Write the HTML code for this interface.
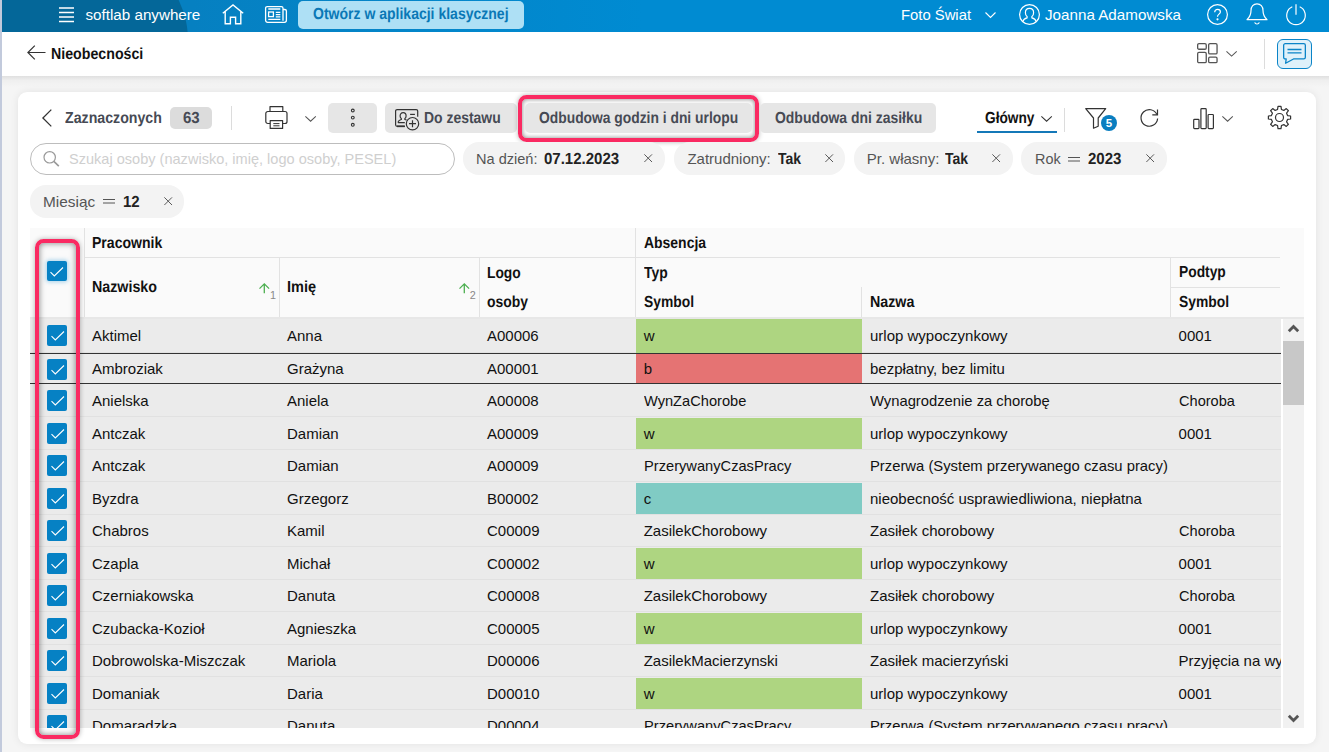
<!DOCTYPE html>
<html lang="pl">
<head>
<meta charset="utf-8">
<title>Nieobecności</title>
<style>
*{box-sizing:border-box;margin:0;padding:0}
html,body{width:1329px;height:752px;overflow:hidden}
body{font-family:"Liberation Sans",sans-serif;font-size:15px;color:#111;background:#f5f5f5;position:relative}
.abs{position:absolute}
.b{font-weight:bold;font-size:16px;display:inline-block;transform-origin:0 50%;transform:scaleX(.872);white-space:nowrap;text-rendering:geometricPrecision}
.t{position:absolute;white-space:nowrap;line-height:20px}
svg{position:absolute;overflow:visible}
#edge{left:0;top:0;width:2px;height:752px;background:#c2cadc}
#top{left:2px;top:0;width:1327px;height:31.700px;background:linear-gradient(90deg,#0680c1 190px,#008bd2 640px);overflow:hidden}
#topdark{left:-40px;top:-60px;width:226px;height:200px;background:#046799;border-radius:0 50% 50% 0/0 50% 50% 0}
#top .t{color:#fff;font-size:15px;line-height:20px;top:5px}
#bar2{left:2px;top:31.700px;width:1327px;height:44.300px;background:#fff}
#shade{left:2px;top:76px;width:1327px;height:11px;background:linear-gradient(#e0e0e0,#efefef 40%,#f5f5f5)}
#card{left:17.5px;top:91.5px;width:1298px;height:652px;background:#fff;border-radius:9px;box-shadow:0 0 9px rgba(0,0,0,.08)}

.btn{position:absolute;top:103px;height:30px;background:#e6e6e6;border-radius:5px}
.bt{position:absolute;top:107.700px;line-height:20px;color:#464a54;white-space:nowrap}
.chip{position:absolute;height:32.800px;background:#f3f3f3;border-radius:16px}
.ct{position:absolute;line-height:20px;white-space:nowrap;color:#555}
.ct .b{color:#222}
.x{position:absolute;width:8.400px;height:8.400px}

#tbl{position:absolute;left:30px;top:228px;width:1274px;height:499.500px;overflow:hidden;background:#fff}
#hdr{position:absolute;left:0;top:0;width:1274px;height:91px;background:#fafafa;border-bottom:2px solid #e7e7e7}
.vl{position:absolute;width:1px;background:#e2e2e2}
.hl{position:absolute;height:1px;background:#e2e2e2}
.ht{position:absolute;line-height:20px;white-space:nowrap;color:#111}
.row{position:absolute;left:0;width:1251px;height:32.500px;background:#ebebeb;border-bottom:1px solid #e1e1e1}
.row span{position:absolute;top:6.500px;line-height:20px;white-space:nowrap;color:#111}
.cc{position:absolute;left:605.800px;top:.500px;width:226.400px;height:31px}
.cb{position:absolute;left:17px;top:5.500px;width:20.300px;height:21px;background:#0681c4;border-radius:2px}
.cb svg{left:3.700px;top:6px}
</style>
</head>
<body>
<div class="abs" id="edge"></div>
<div class="abs" id="top">
  <div class="abs" id="topdark"></div>
  <svg style="left:56.5px;top:7px" width="15" height="16" viewBox="0 0 15 16" fill="none" stroke="#fff" stroke-width="1.5"><path d="M0 1h15M0 5.5h15M0 10h15M0 14.5h15"/></svg>
  <span class="t" style="left:83.5px;font-size:15.2px;top:5px">softlab anywhere</span>
  <svg style="left:219.5px;top:3.5px" width="22" height="21" viewBox="0 0 22 21" fill="none" stroke="#fff" stroke-width="1.4" stroke-linejoin="miter"><path d="M0.8 9.2L11 0.9l10.2 8.3M3.2 7.6V19.8h5.2v-6.6h5.2v6.6h5.2V7.6"/></svg>
  <svg style="left:262.5px;top:6px" width="22" height="17" viewBox="0 0 22 17" fill="none" stroke="#fff" stroke-width="1.3"><path d="M18 3.5h1.8a1.6 1.6 0 0 1 1.6 1.6v9.2a2 2 0 0 1-2 2H2.6a2 2 0 0 1-2-2V2.2A1.6 1.6 0 0 1 2.200 .6h14.200a1.600 1.600 0 0 1 1.600 1.600v12.600"/><path d="M3.300 3h12M3.300 13.300h12M10.800 6.300h4.500M10.800 8.600h4.500M10.800 10.800h4.500"/><rect x="3.600" y="6" width="4.800" height="4.600"/></svg>
  <div class="abs" style="left:296px;top:1px;width:225.500px;height:28px;background:#aee0f5;border-radius:5px"></div>
  <span class="t" style="left:311.300px;top:4.300px;color:#0a78b6"><span class="b" style="transform:scaleX(.876)">Otwórz w aplikacji klasycznej</span></span>
  <span class="t" style="left:899.200px;top:4.500px"><span style="display:inline-block;transform-origin:0 50%;transform:scaleX(.988)">Foto Świat</span></span>
  <svg style="left:983px;top:11.500px" width="11" height="6" viewBox="0 0 11 6" fill="none" stroke="#fff" stroke-width="1.100"><path d="M.5.500l5 5 5-5"/></svg>
  <svg style="left:1016.500px;top:3.900px" width="21" height="21" viewBox="0 0 21 21" fill="none" stroke="#fff" stroke-width="1.200"><circle cx="10.500" cy="10.500" r="9.900"/><path d="M3.800 17.600c.6-2.400 2.200-3.200 4.300-3.700v-1.300c-1.100-.8-1.700-2.200-1.700-3.900 0-2.500 1.600-4.300 4.100-4.300s4.100 1.800 4.100 4.300c0 1.700-.6 3.100-1.700 3.900v1.300c2.100.5 3.700 1.300 4.300 3.700"/></svg>
  <span class="t" style="left:1043.300px;top:4.500px"><span style="display:inline-block;transform-origin:0 50%;transform:scaleX(1.013)">Joanna Adamowska</span></span>
  <svg style="left:1204.700px;top:3.900px" width="21" height="21" viewBox="0 0 21 21" fill="none" stroke="#fff" stroke-width="1.200"><circle cx="10.500" cy="10.500" r="9.900"/><path d="M7.700 8.200c0-1.700 1.200-2.800 2.900-2.800 1.600 0 2.800 1 2.800 2.500 0 2.200-2.900 2.300-2.900 4.800"/><circle cx="10.500" cy="15.300" r=".5" fill="#fff"/></svg>
  <svg style="left:1244px;top:2.900px" width="22" height="22" viewBox="0 0 22 22" fill="none" stroke="#fff" stroke-width="1.200" stroke-linejoin="round"><path d="M11 .8c-3.600 0-6 2.800-6 6.600 0 4.500-1.700 7-4 9.300h20c-2.300-2.300-4-4.800-4-9.300 0-3.800-2.400-6.600-6-6.600z"/><path d="M8.700 19.300a2.400 2.400 0 0 0 4.600 0"/></svg>
  <svg style="left:1283.500px;top:3.500px" width="20" height="21" viewBox="0 0 20 21" fill="none" stroke="#fff" stroke-width="1.200"><path d="M10 .3v10.500"/><path d="M6.300 2.800a9.300 9.300 0 1 0 7.400 0"/></svg>
</div>
<div class="abs" id="bar2">
  <svg style="left:24.500px;top:13px" width="19" height="15" viewBox="0 0 19 15" fill="none" stroke="#333" stroke-width="1.200"><path d="M18.500 7.500H1M7.800.600L.900 7.500l6.900 6.900"/></svg>
  <span class="t" style="left:48.800px;top:12.300px;color:#111"><span class="b" style="transform:scaleX(.887)">Nieobecności</span></span>
  <svg style="left:1195px;top:11.200px" width="21" height="21" viewBox="0 0 21 21" fill="none" stroke="#555" stroke-width="1.300"><rect x=".65" y=".65" width="8.600" height="5.600" rx="1.300"/><rect x=".65" y="9.400" width="8.600" height="10.300" rx="1.300"/><rect x="11.650" y=".65" width="8.400" height="10.300" rx="1.300"/><rect x="11.650" y="14.100" width="8.400" height="5.600" rx="1.300"/></svg>
  <svg style="left:1224.200px;top:19.500px" width="11.200" height="5.600" viewBox="0 0 12 6" fill="none" stroke="#555" stroke-width="1.100"><path d="M.5.400l5.500 5 5.500-5"/></svg>
  <div class="abs" style="left:1262px;top:7.500px;width:1px;height:30px;background:#dcdcdc"></div>
  <div class="abs" style="left:1275px;top:7.500px;width:35px;height:30px;border:1.500px solid #0a84c8;background:#dff1fa;border-radius:6px"></div>
  <svg style="left:1281.400px;top:11.400px" width="23" height="21" viewBox="0 0 23 21" fill="none" stroke="#0a84c8" stroke-width="1.300" stroke-linejoin="round"><path d="M2.300.65h18.400a1.650 1.650 0 0 1 1.650 1.650v12a1.650 1.650 0 0 1-1.650 1.650H10.500L2.600 20.300l.600-4.350H2.300A1.650 1.650 0 0 1 .65 14.300v-12A1.650 1.650 0 0 1 2.300.65z"/><path d="M4.500 6.500h14M4.500 9.800h14"/></svg>
</div>
<div class="abs" id="shade"></div>
<div class="abs" id="card"></div>
<div id="toolbar">
  <svg style="left:41.500px;top:109px" width="10" height="18" viewBox="0 0 10 18" fill="none" stroke="#333" stroke-width="1.300"><path d="M9.300.600L.900 9l8.400 8.400"/></svg>
  <span class="bt" style="left:64.500px"><span class="b" style="transform:scaleX(0.886)">Zaznaczonych</span></span>
  <div class="abs" style="left:170px;top:107px;width:42px;height:22px;background:#dcdcdc;border-radius:5px"></div>
  <span class="bt" style="left:182.500px"><span class="b" style="transform:scaleX(.9375)">63</span></span>
  <div class="abs" style="left:230.500px;top:106px;width:1px;height:24px;background:#dcdcdc"></div>
  <svg style="left:265px;top:106px" width="23" height="23" viewBox="0 0 23 23" fill="none" stroke="#333" stroke-width="1.200" stroke-linejoin="round"><path d="M5 5.500V.600h12.800V5.500"/><path d="M5.200 17.500H2.800A2 2 0 0 1 .800 15.500V7.500a2 2 0 0 1 2-2h17.200a2 2 0 0 1 2 2v8a2 2 0 0 1-2 2h-2.400"/><path d="M5.200 14.600h12.400v7.800H5.200z"/><path d="M8.300 17.600h6.200M8.300 19.800h6.200" stroke-width="1"/></svg>
  <svg style="left:304.500px;top:115.500px" width="11.200" height="5.600" viewBox="0 0 12 6" fill="none" stroke="#555" stroke-width="1.100"><path d="M.400.400l5.600 5.200 5.600-5.200"/></svg>
  <div class="btn" style="left:328px;width:48.500px"></div>
  <svg style="left:350px;top:108px" width="6" height="20" viewBox="0 0 6 20" fill="none" stroke="#333" stroke-width="1.100"><circle cx="2.800" cy="2.500" r="1.400"/><circle cx="2.800" cy="9.600" r="1.400"/><circle cx="2.800" cy="16.800" r="1.400"/></svg>
  <div class="btn" style="left:385px;width:131.500px"></div>
  <svg style="left:395px;top:108.800px" width="25" height="22" viewBox="0 0 25 22" fill="none" stroke="#333" stroke-width="1.200"><path d="M9.800 17.300H2.100A1.500 1.500 0 0 1 .600 15.800V2.100A1.500 1.500 0 0 1 2.100.600h19.100a1.500 1.500 0 0 1 1.500 1.500v5.700"/><path d="M2 17.300h7.800" stroke-width="1.700"/><path d="M9.800 13.700H3.900c-.600 0-.900-.500-.600-1.100.500-1.100 1.600-1.700 3-2.100v-.900c-.800-.600-1.200-1.500-1.200-2.600 0-1.900 1.200-3.300 3-3.300s3 1.400 3 3.300c0 1.100-.400 2-1.200 2.600v.900c.700.200 1.200.400 1.600.700"/><path d="M15.100 5.400h4.800"/><circle cx="17.500" cy="14.700" r="6.200" fill="#e6e6e6"/><path d="M17.500 11.200v7M14 14.700h7"/></svg>
  <span class="bt" style="left:423.600px"><span class="b" style="transform:scaleX(0.872)">Do zestawu</span></span>
  <div class="abs" style="left:518.400px;top:95px;width:240.600px;height:47px;border:4.300px solid #fa2a62;border-radius:8.500px;box-shadow:0 0 5px rgba(0,0,0,.3),inset 0 0 5px rgba(0,0,0,.5)"></div>
  <div class="btn" style="left:524.500px;width:227px"></div>
  <span class="bt" style="left:538.500px"><span class="b" style="transform:scaleX(0.865)">Odbudowa godzin i dni urlopu</span></span>
  <div class="btn" style="left:759.500px;width:176px"></div>
  <span class="bt" style="left:774.500px"><span class="b" style="transform:scaleX(0.872)">Odbudowa dni zasiłku</span></span>
  <span class="bt" style="left:984.500px;color:#111"><span class="b" style="transform:scaleX(0.855)">Główny</span></span>
  <svg style="left:1041px;top:115.500px" width="11.200" height="5.600" viewBox="0 0 12 6" fill="none" stroke="#333" stroke-width="1.100"><path d="M.400.400l5.600 5.200 5.600-5.200"/></svg>
  <div class="abs" style="left:977px;top:130.500px;width:80px;height:2px;background:#1478b8"></div>
  <div class="abs" style="left:1064px;top:108px;width:1px;height:24px;background:#dcdcdc"></div>
  <svg style="left:1085px;top:107.500px" width="22" height="21" viewBox="0 0 22 21" fill="none" stroke="#333" stroke-width="1.200" stroke-linejoin="round"><path d="M.700.700h20L13.200 10v8.200L8.500 20.200V10z"/></svg>
  <div class="abs" style="left:1101px;top:115px;width:16.400px;height:16.400px;border-radius:50%;background:#0a7ec0"></div>
  <span class="t" style="left:1105.800px;top:113px;color:#fff;font-size:11.500px;font-weight:bold">5</span>
  <svg style="left:1139.500px;top:107.500px" width="20" height="20" viewBox="0 0 20 20" fill="none" stroke="#333" stroke-width="1.200"><path d="M16.900 6.500A8.300 8.300 0 1 0 17.600 10.500"/><path d="M12.300 6.900h5.200V1.600"/></svg>
  <svg style="left:1192.500px;top:107.500px" width="21" height="21" viewBox="0 0 21 21" fill="none" stroke="#333" stroke-width="1.200"><rect x=".700" y="11.400" width="5.300" height="9.200" rx=".800"/><rect x="7.900" y=".600" width="5.300" height="20" rx=".800"/><rect x="15.100" y="6.500" width="5.300" height="14.100" rx=".800"/></svg>
  <svg style="left:1222px;top:115.500px" width="11.200" height="5.600" viewBox="0 0 12 6" fill="none" stroke="#555" stroke-width="1.100"><path d="M.400.400l5.600 5.200 5.600-5.200"/></svg>
  <svg style="left:1267.700px;top:106px" width="23" height="23" viewBox="0 0 23 23" fill="none" stroke="#333" stroke-width="1.200" stroke-linejoin="round"><path d="M22.600 10.010 L22.600 12.990 L19.570 13.440 L18.580 15.840 L20.400 18.290 L18.290 20.400 L15.840 18.580 L13.440 19.570 L12.990 22.600 L10.010 22.600 L9.560 19.570 L7.160 18.580 L4.710 20.400 L2.600 18.290 L4.420 15.840 L3.430 13.440 L.400 12.990 L.400 10.010 L3.430 9.560 L4.420 7.160 L2.600 4.710 L4.710 2.600 L7.160 4.420 L9.560 3.430 L10.010.400 L12.990.400 L13.440 3.430 L15.840 4.420 L18.290 2.600 L20.400 4.710 L18.580 7.160 L19.570 9.560Z"/><circle cx="11.500" cy="11.500" r="4"/></svg>
</div>
<div id="filters">
  <div class="abs" style="left:30px;top:143px;width:424.500px;height:31.500px;border:1px solid #bdbdbd;border-radius:16px;background:#fff"></div>
  <svg style="left:42.500px;top:151px" width="17" height="16" viewBox="0 0 17 16" fill="none" stroke="#999" stroke-width="1.200"><circle cx="6.700" cy="6.300" r="5.700"/><path d="M10.800 10.400l5 4.800" stroke-width="1.600"/></svg>
  <span class="ct" style="left:68.500px;top:149px;color:#cfcfcf"><span style="display:inline-block;transform-origin:0 50%;transform:scaleX(.97)">Szukaj osoby (nazwisko, imię, logo osoby, PESEL)</span></span>
  <div class="chip" style="left:463.200px;top:142.200px;width:202px"></div>
  <span class="ct" style="left:476px;top:149px"><span style="display:inline-block;transform-origin:0 50%;transform:scaleX(.97)">Na dzień:</span></span>
  <span class="ct" style="left:544px;top:149px"><span class="b" style="transform:scaleX(.9375)">07.12.2023</span></span>
  <svg class="x" style="left:644px;top:154px" viewBox="0 0 9 9" fill="none" stroke="#555" stroke-width="1.050"><path d="M.400.400l8.200 8.200M8.600.400L.400 8.600"/></svg>
  <div class="chip" style="left:674px;top:142.200px;width:171px"></div>
  <span class="ct" style="left:687.400px;top:149px">Zatrudniony:</span>
  <span class="ct" style="left:777.500px;top:149px"><span class="b" style="transform:scaleX(0.872)">Tak</span></span>
  <svg class="x" style="left:824.5px;top:154px" viewBox="0 0 9 9" fill="none" stroke="#555" stroke-width="1.050"><path d="M.400.400l8.200 8.200M8.600.400L.400 8.600"/></svg>
  <div class="chip" style="left:853.500px;top:142.200px;width:159.700px"></div>
  <span class="ct" style="left:866.800px;top:149px">Pr. własny:</span>
  <span class="ct" style="left:945px;top:149px"><span class="b" style="transform:scaleX(0.872)">Tak</span></span>
  <svg class="x" style="left:992.2px;top:154px" viewBox="0 0 9 9" fill="none" stroke="#555" stroke-width="1.050"><path d="M.400.400l8.200 8.200M8.600.400L.400 8.600"/></svg>
  <div class="chip" style="left:1021px;top:142.200px;width:146.200px"></div>
  <span class="ct" style="left:1035px;top:149px"><span style="display:inline-block;transform-origin:0 50%;transform:scaleX(.96)">Rok</span></span>
  <svg style="left:1068px;top:156.5px" width="12" height="5" viewBox="0 0 12 5" fill="none" stroke="#555" stroke-width="1"><path d="M0 .500h12M0 4h12"/></svg>
  <span class="ct" style="left:1088px;top:149px"><span class="b" style="transform:scaleX(.9375)">2023</span></span>
  <svg class="x" style="left:1145.5px;top:154px" viewBox="0 0 9 9" fill="none" stroke="#555" stroke-width="1.050"><path d="M.400.400l8.200 8.200M8.600.400L.400 8.600"/></svg>
  <div class="chip" style="left:30px;top:185px;width:154px"></div>
  <span class="ct" style="left:43px;top:191.500px;transform-origin:0 50%;transform:scaleX(1.025)">Miesiąc</span>
  <svg style="left:102.8px;top:198.5px" width="12" height="5" viewBox="0 0 12 5" fill="none" stroke="#555" stroke-width="1"><path d="M0 .500h12M0 4h12"/></svg>
  <span class="ct" style="left:122.800px;top:191.500px"><span class="b" style="transform:scaleX(.9375)">12</span></span>
  <svg class="x" style="left:163.5px;top:197px" viewBox="0 0 9 9" fill="none" stroke="#555" stroke-width="1.050"><path d="M.400.400l8.200 8.200M8.600.400L.400 8.600"/></svg>
</div>
<div id="tbl">
<div id="hdr">
<span class="ht" style="left:62px;top:4.600px"><span class="b" style="transform:scaleX(0.878)">Pracownik</span></span><span class="ht" style="left:613.700px;top:4.600px"><span class="b" style="transform:scaleX(0.872)">Absencja</span></span><span class="ht" style="left:62px;top:49px"><span class="b" style="transform:scaleX(0.891)">Nazwisko</span></span><span class="ht" style="left:257px;top:49px"><span class="b" style="transform:scaleX(0.906)">Imię</span></span><span class="ht" style="left:457px;top:34.5px"><span class="b" style="transform:scaleX(0.863)">Logo</span></span><span class="ht" style="left:457px;top:63.5px"><span class="b" style="transform:scaleX(0.870)">osoby</span></span><span class="ht" style="left:613.7px;top:34.5px"><span class="b" style="transform:scaleX(0.869)">Typ</span></span><span class="ht" style="left:613.7px;top:63.5px"><span class="b" style="transform:scaleX(0.865)">Symbol</span></span><span class="ht" style="left:840px;top:63.5px"><span class="b" style="transform:scaleX(0.891)">Nazwa</span></span><span class="ht" style="left:1148.6px;top:34px"><span class="b" style="transform:scaleX(0.863)">Podtyp</span></span><span class="ht" style="left:1148.6px;top:63.5px"><span class="b" style="transform:scaleX(0.865)">Symbol</span></span>
<div class="vl" style="left:54.100px;top:0px;height:89px"></div><div class="vl" style="left:249px;top:30px;height:59px"></div><div class="vl" style="left:449px;top:30px;height:59px"></div><div class="vl" style="left:605px;top:0px;height:89px"></div><div class="vl" style="left:831.3px;top:59px;height:30px"></div><div class="vl" style="left:1140px;top:30px;height:59px"></div><div class="hl" style="left:55px;top:29px;width:1195px"></div><div class="hl" style="left:1140px;top:59px;width:110px"></div>
<div class="cb" style="left:16.500px;top:32.500px;height:20.300px;width:20.500px;box-shadow:0 0 4px 1px rgba(11,134,202,.35)"><svg width="13.500" height="9.600" viewBox="0 0 13.500 9.600" fill="none" stroke="#fff" stroke-width="1.100"><path d="M.500 5.200l3.800 3.700L13 .500"/></svg></div>
<svg style="left:229.300px;top:54.500px" width="10.600" height="10.200" viewBox="0 0 10.600 10.200" fill="none" stroke="#4caf50" stroke-width="1.300"><path d="M5.300 10.200V1M.500 5.600l4.800-4.800 4.800 4.800"/></svg><span class="ht" style="left:240px;top:61px;font-size:10.800px;color:#888;line-height:12px">1</span><svg style="left:429.200px;top:54.500px" width="10.600" height="10.200" viewBox="0 0 10.600 10.200" fill="none" stroke="#4caf50" stroke-width="1.300"><path d="M5.300 10.200V1M.500 5.600l4.800-4.800 4.800 4.800"/></svg><span class="ht" style="left:439.800px;top:61px;font-size:10.800px;color:#888;line-height:12px">2</span>
</div>
<div class="abs" style="left:0;top:91px;width:1251px;height:420px;background:#ebebeb"></div>
<div class="row" style="top:91px;height:33.600px"><div class="cc" style="background:#aed581;top:0;height:33.600px"></div><div class="cb"><svg width="13.500" height="9.600" viewBox="0 0 13.500 9.600" fill="none" stroke="#fff" stroke-width="1.100"><path d="M.500 5.200l3.800 3.700L13 .500"/></svg></div><span style="left:62px">Aktimel</span><span style="left:257px">Anna</span><span style="left:457px">A00006</span><span style="left:613.7px">w</span><span style="left:840px">urlop wypoczynkowy</span><span style="left:1148.6px">0001</span></div>
<div class="row" style="border-top:1px solid #333;border-bottom:1px solid #333;height:31.400px;top:124.600px"><div class="cc" style="background:#e57373;top:.700px;height:29.200px"></div><div class="cb" style=top:5px><svg width="13.500" height="9.600" viewBox="0 0 13.500 9.600" fill="none" stroke="#fff" stroke-width="1.100"><path d="M.500 5.200l3.800 3.700L13 .500"/></svg></div><span style="left:62px;top:5.500px">Ambroziak</span><span style="left:257px;top:5.500px">Grażyna</span><span style="left:457px;top:5.500px">A00001</span><span style="left:613.7px;top:5.500px">b</span><span style="left:840px;top:5.500px">bezpłatny, bez limitu</span></div>
<div class="row" style="top:156.5px"><div class="cb"><svg width="13.500" height="9.600" viewBox="0 0 13.500 9.600" fill="none" stroke="#fff" stroke-width="1.100"><path d="M.500 5.200l3.800 3.700L13 .500"/></svg></div><span style="left:62px">Anielska</span><span style="left:257px">Aniela</span><span style="left:457px">A00008</span><span style="left:613.7px;transform-origin:0 50%;transform:scaleX(0.975)">WynZaChorobe</span><span style="left:840px;transform-origin:0 50%;transform:scaleX(0.985)">Wynagrodzenie za chorobę</span><span style="left:1148.6px;transform-origin:0 50%;transform:scaleX(0.972)">Choroba</span></div>
<div class="row" style="top:189.0px"><div class="cc" style="background:#aed581"></div><div class="cb"><svg width="13.500" height="9.600" viewBox="0 0 13.500 9.600" fill="none" stroke="#fff" stroke-width="1.100"><path d="M.500 5.200l3.800 3.700L13 .500"/></svg></div><span style="left:62px">Antczak</span><span style="left:257px">Damian</span><span style="left:457px">A00009</span><span style="left:613.7px">w</span><span style="left:840px">urlop wypoczynkowy</span><span style="left:1148.6px">0001</span></div>
<div class="row" style="top:221.5px"><div class="cb"><svg width="13.500" height="9.600" viewBox="0 0 13.500 9.600" fill="none" stroke="#fff" stroke-width="1.100"><path d="M.500 5.200l3.800 3.700L13 .500"/></svg></div><span style="left:62px">Antczak</span><span style="left:257px">Damian</span><span style="left:457px">A00009</span><span style="left:613.7px;transform-origin:0 50%;transform:scaleX(0.977)">PrzerywanyCzasPracy</span><span style="left:840px;transform-origin:0 50%;transform:scaleX(0.987)">Przerwa (System przerywanego czasu pracy)</span></div>
<div class="row" style="top:254.0px"><div class="cc" style="background:#80cbc4"></div><div class="cb"><svg width="13.500" height="9.600" viewBox="0 0 13.500 9.600" fill="none" stroke="#fff" stroke-width="1.100"><path d="M.500 5.200l3.800 3.700L13 .500"/></svg></div><span style="left:62px">Byzdra</span><span style="left:257px">Grzegorz</span><span style="left:457px">B00002</span><span style="left:613.7px">c</span><span style="left:840px">nieobecność usprawiedliwiona, niepłatna</span></div>
<div class="row" style="top:286.5px"><div class="cb"><svg width="13.500" height="9.600" viewBox="0 0 13.500 9.600" fill="none" stroke="#fff" stroke-width="1.100"><path d="M.500 5.200l3.800 3.700L13 .500"/></svg></div><span style="left:62px">Chabros</span><span style="left:257px">Kamil</span><span style="left:457px">C00009</span><span style="left:613.7px">ZasilekChorobowy</span><span style="left:840px">Zasiłek chorobowy</span><span style="left:1148.6px;transform-origin:0 50%;transform:scaleX(0.972)">Choroba</span></div>
<div class="row" style="top:319.0px"><div class="cc" style="background:#aed581"></div><div class="cb"><svg width="13.500" height="9.600" viewBox="0 0 13.500 9.600" fill="none" stroke="#fff" stroke-width="1.100"><path d="M.500 5.200l3.800 3.700L13 .500"/></svg></div><span style="left:62px">Czapla</span><span style="left:257px">Michał</span><span style="left:457px">C00002</span><span style="left:613.7px">w</span><span style="left:840px">urlop wypoczynkowy</span><span style="left:1148.6px">0001</span></div>
<div class="row" style="top:351.5px"><div class="cb"><svg width="13.500" height="9.600" viewBox="0 0 13.500 9.600" fill="none" stroke="#fff" stroke-width="1.100"><path d="M.500 5.200l3.800 3.700L13 .500"/></svg></div><span style="left:62px">Czerniakowska</span><span style="left:257px">Danuta</span><span style="left:457px">C00008</span><span style="left:613.7px">ZasilekChorobowy</span><span style="left:840px">Zasiłek chorobowy</span><span style="left:1148.6px;transform-origin:0 50%;transform:scaleX(0.972)">Choroba</span></div>
<div class="row" style="top:384.0px"><div class="cc" style="background:#aed581"></div><div class="cb"><svg width="13.500" height="9.600" viewBox="0 0 13.500 9.600" fill="none" stroke="#fff" stroke-width="1.100"><path d="M.500 5.200l3.800 3.700L13 .500"/></svg></div><span style="left:62px">Czubacka-Kozioł</span><span style="left:257px">Agnieszka</span><span style="left:457px">C00005</span><span style="left:613.7px">w</span><span style="left:840px">urlop wypoczynkowy</span><span style="left:1148.6px">0001</span></div>
<div class="row" style="top:416.5px"><div class="cb"><svg width="13.500" height="9.600" viewBox="0 0 13.500 9.600" fill="none" stroke="#fff" stroke-width="1.100"><path d="M.500 5.200l3.800 3.700L13 .500"/></svg></div><span style="left:62px">Dobrowolska-Miszczak</span><span style="left:257px">Mariola</span><span style="left:457px">D00006</span><span style="left:613.7px">ZasilekMacierzynski</span><span style="left:840px">Zasiłek macierzyński</span><span style="left:1148.6px">Przyjęcia na wypoczynek</span></div>
<div class="row" style="top:449.0px"><div class="cc" style="background:#aed581"></div><div class="cb"><svg width="13.500" height="9.600" viewBox="0 0 13.500 9.600" fill="none" stroke="#fff" stroke-width="1.100"><path d="M.500 5.200l3.800 3.700L13 .500"/></svg></div><span style="left:62px">Domaniak</span><span style="left:257px">Daria</span><span style="left:457px">D00010</span><span style="left:613.7px">w</span><span style="left:840px">urlop wypoczynkowy</span><span style="left:1148.6px">0001</span></div>
<div class="row" style="top:481.5px"><div class="cb"><svg width="13.500" height="9.600" viewBox="0 0 13.500 9.600" fill="none" stroke="#fff" stroke-width="1.100"><path d="M.500 5.200l3.800 3.700L13 .500"/></svg></div><span style="left:62px">Domaradzka</span><span style="left:257px">Danuta</span><span style="left:457px">D00004</span><span style="left:613.7px;transform-origin:0 50%;transform:scaleX(0.977)">PrzerywanyCzasPracy</span><span style="left:840px;transform-origin:0 50%;transform:scaleX(0.987)">Przerwa (System przerywanego czasu pracy)</span></div>
<div class="abs" style="left:1251px;top:91px;width:2px;height:410px;background:#fff"></div>
<div class="abs" style="left:1253px;top:91px;width:21px;height:410px;background:#f1f1f1"></div>
<div class="abs" style="left:1253px;top:113px;width:21px;height:64px;background:#c8c8c8"></div>
<svg style="left:1258px;top:97px" width="11" height="7" viewBox="0 0 11 7" fill="none" stroke="#555" stroke-width="2.800"><path d="M.800 6.200L5.500 1.500l4.700 4.700"/></svg>
<svg style="left:1258px;top:487px" width="11" height="7" viewBox="0 0 11 7" fill="none" stroke="#555" stroke-width="2.800"><path d="M.800.800L5.500 5.500l4.700-4.700"/></svg>
</div>
<div class="abs" style="left:35.400px;top:239.300px;width:44.400px;height:499.300px;border:4.300px solid #fa2a62;border-radius:8.500px;box-shadow:0 0 5px rgba(0,0,0,.3),inset 0 0 6px rgba(0,0,0,.5)"></div>
</body>
</html>
